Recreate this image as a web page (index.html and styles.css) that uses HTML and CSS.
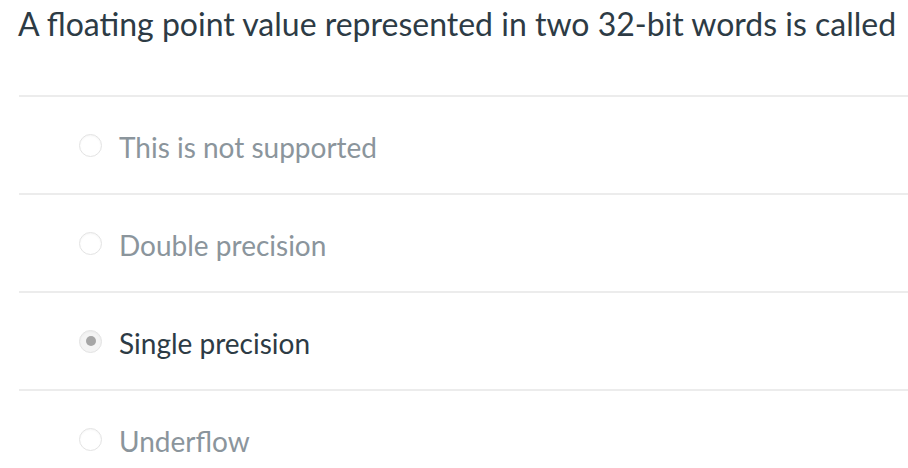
FILE: index.html
```html
<!DOCTYPE html>
<html>
<head>
<meta charset="utf-8">
<link rel="stylesheet" href="styles.css">
</head>
<body>
<div class="question">
  <h1 class="title">A floating point value represented in two 32-bit words is called</h1>
  <div class="answers">
    <div class="answer">
      <span class="radio"></span>
      <span class="label">This is not supported</span>
    </div>
    <div class="answer">
      <span class="radio"></span>
      <span class="label">Double precision</span>
    </div>
    <div class="answer selected">
      <span class="radio"><span class="dot"></span></span>
      <span class="label">Single precision</span>
    </div>
    <div class="answer">
      <span class="radio"></span>
      <span class="label">Underflow</span>
    </div>
  </div>
</div>
</body>
</html>
```
FILE: styles.css
```css
html, body {
  margin: 0;
  padding: 0;
  background: #ffffff;
}
body {
  font-family: Lato, "Open Sans", sans-serif;
  color: #2d3b45;
  width: 908px;
  height: 468px;
  overflow: hidden;
}
.title {
  margin: 0;
  padding: 2px 0 0 18px;
  height: 93px;
  font-size: 32px;
  font-weight: 400;
  line-height: 44px;
  white-space: nowrap;
}
.answers {
  margin-left: 19px;
}
.answer {
  border-top: 2px solid #ececec;
  height: 96px;
  display: flex;
  align-items: center;
  padding-left: 60px;
  gap: 17px;
}
.radio {
  width: 21px;
  height: 21px;
  border-radius: 50%;
  border: 1px solid #e3e3e3;
  box-shadow: inset 0 1px 2px rgba(0,0,0,0.04);
  display: flex;
  align-items: center;
  justify-content: center;
  background: #fff;
  flex: none;
}
.selected .radio {
  background: #f4f4f4;
}
.dot {
  width: 10px;
  height: 10px;
  border-radius: 50%;
  background: #a6a6a6;
}
.label {
  font-size: 28px;
  color: #8b959c;
  line-height: 32px;
  padding-top: 3px;
}
.selected .label {
  color: #2d3b45;
}
```
